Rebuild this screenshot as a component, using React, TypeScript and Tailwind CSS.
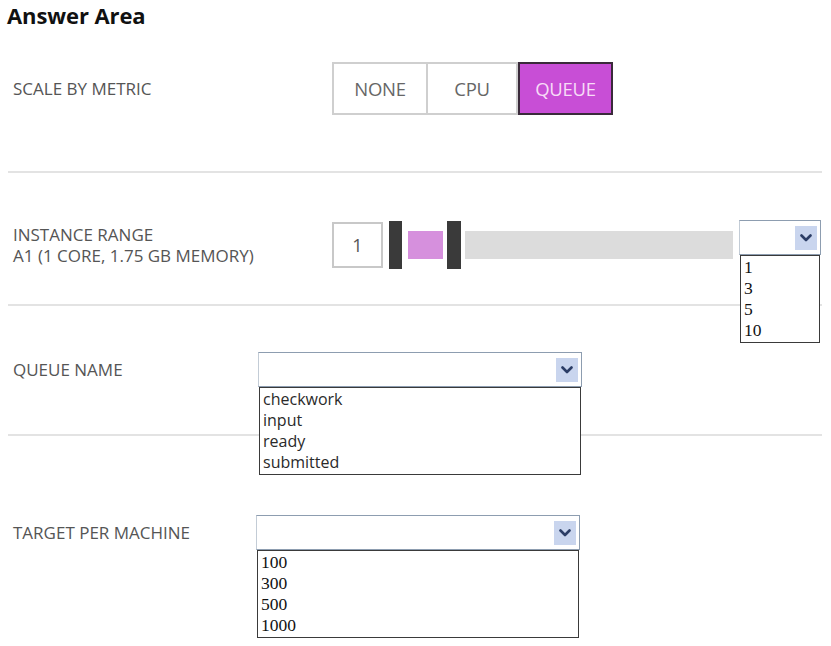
import React from 'react';

const Chevron: React.FC = () => (
  <svg width="12" height="8" viewBox="0 0 12 8" fill="none">
    <path d="M1.5 1.5 L6 6 L10.5 1.5" stroke="#2b3d66" strokeWidth="2.6" strokeLinecap="round" strokeLinejoin="round" />
  </svg>
);

type DropProps = {
  width: string;
  items: string[];
  serif?: boolean;
};

const Dropdown: React.FC<DropProps> = ({ width, items, serif }) => (
  <div className={`relative ${width}`}>
    <div className="h-[35px] flex items-center justify-end bg-white border border-[#8d9db0] border-l-[#c3ccd6] pr-[3px]">
      <div className="w-[22px] h-[24px] bg-[#c9d5ee] flex items-center justify-center">
        <Chevron />
      </div>
    </div>
    <div
      className={`absolute left-[1px] right-[1px] top-[35px] bg-white border-[1.5px] border-[#3a3a3a] pl-[3px] py-[1px] z-10 ${
        serif
          ? "font-['Liberation_Serif',serif] text-[17.5px] leading-[21px] text-[#111]"
          : "font-['Open_Sans',sans-serif] text-[16px] leading-[21px] text-[#2a2a2a]"
      }`}
    >
      {items.map((it) => (
        <div key={it}>{it}</div>
      ))}
    </div>
  </div>
);

const Divider: React.FC = () => <div className="ml-[8px] w-[814px] h-[2px] bg-[#e3e3e3]" />;

const Label: React.FC<{ children: React.ReactNode }> = ({ children }) => (
  <div className="text-[17px] leading-[21px] text-[#555]">{children}</div>
);

const App: React.FC = () => {
  return (
    <div className="w-[831px] h-[646px] bg-white overflow-hidden font-['Open_Sans',sans-serif]">
      <h1 className="pl-[7px] pt-[1px] h-[30px] text-[22px] leading-[28px] font-bold text-[#111] tracking-[-0.1px]">
        Answer Area
      </h1>

      {/* scale by metric */}
      <div className="mt-[32px] flex items-center h-[53px]">
        <div className="w-[332px] pl-[13px]">
          <Label>SCALE BY METRIC</Label>
        </div>
        <div className="flex h-[53px] text-[18.5px] text-[#666] tracking-[-0.3px]">
          <div className="w-[94px] flex items-center justify-center border-2 border-r-0 border-[#cfcfcf]">NONE</div>
          <div className="w-[92px] flex items-center justify-center border-2 border-[#cfcfcf]">CPU</div>
          <div className="w-[95px] flex items-center justify-center bg-[#c84ed6] border-2 border-[#3a2a3a] text-[#f7dcf7]">
            QUEUE
          </div>
        </div>
      </div>

      <div className="mt-[56px]">
        <Divider />
      </div>

      {/* instance range */}
      <div className="mt-[47px] flex items-center h-[50px]">
        <div className="w-[332px] pl-[13px]">
          <Label>
            INSTANCE RANGE
            <br />
            A1 (1 CORE, 1.75 GB MEMORY)
          </Label>
        </div>
        <div className="flex items-center">
          <div className="w-[51px] h-[46px] border-2 border-[#c8c8c8] flex items-center justify-center text-[18px] text-[#555]">
            1
          </div>
          <div className="ml-[6px] w-[13px] h-[48px] bg-[#3a3a3a]" />
          <div className="ml-[6px] w-[35px] h-[28px] bg-[#d690dd]" />
          <div className="ml-[4px] w-[14px] h-[48px] bg-[#3a3a3a]" />
          <div className="ml-[4px] w-[268px] h-[28px] bg-[#dcdcdc]" />
          <div className="ml-[6px] self-start -mt-[1px]">
            <Dropdown width="w-[82px]" items={['1', '3', '5', '10']} serif />
          </div>
        </div>
      </div>

      <div className="mt-[34px]">
        <Divider />
      </div>

      {/* queue name */}
      <div className="mt-[46px] flex items-center h-[35px]">
        <div className="w-[258px] pl-[13px]">
          <Label>QUEUE NAME</Label>
        </div>
        <Dropdown width="w-[324px]" items={['checkwork', 'input', 'ready', 'submitted']} />
      </div>

      <div className="mt-[47px]">
        <Divider />
      </div>

      {/* target per machine */}
      <div className="mt-[79px] flex items-center h-[35px]">
        <div className="w-[256px] pl-[13px]">
          <Label>TARGET PER MACHINE</Label>
        </div>
        <Dropdown width="w-[324px]" items={['100', '300', '500', '1000']} serif />
      </div>
    </div>
  );
};

export default App;
